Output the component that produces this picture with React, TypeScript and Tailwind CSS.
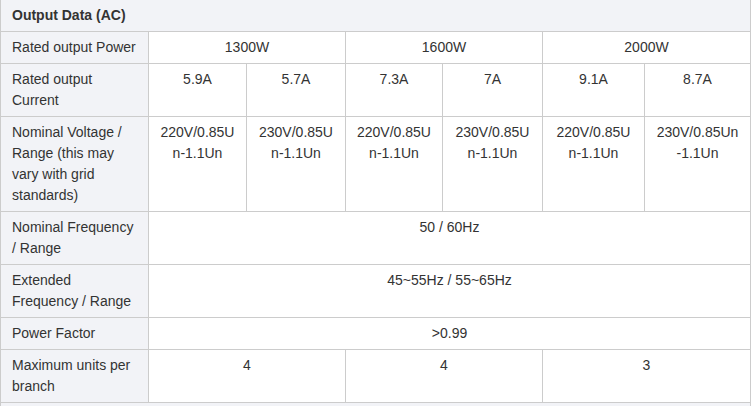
import React from "react";

const th = "border border-[#cccccc] bg-[#f2f3f7] pl-[11px] pr-[10px] py-[5px] text-left align-top font-normal";
const td = "border border-[#cccccc] bg-white px-[10px] py-[5px] text-center align-top";

export default function App() {
  return (
    <div className="bg-white" style={{ fontFamily: '"Liberation Sans", Arial, sans-serif' }}>
      <table className="table-fixed border-collapse w-[750px] text-[14px] leading-[21px] text-[#333333]">
        <colgroup>
          <col className="w-[148px]" />
          <col className="w-[98px]" />
          <col className="w-[99px]" />
          <col className="w-[97px]" />
          <col className="w-[100px]" />
          <col className="w-[102px]" />
          <col className="w-[106px]" />
        </colgroup>
        <tbody>
          <tr>
            <td colSpan={7} className="border border-t-0 border-[#cccccc] bg-[#f2f3f7] pl-[11px] pr-[10px] py-[5px] text-left font-bold">
              Output Data (AC)
            </td>
          </tr>
          <tr>
            <td className={th}>Rated output Power</td>
            <td colSpan={2} className={td}>1300W</td>
            <td colSpan={2} className={td}>1600W</td>
            <td colSpan={2} className={td}>2000W</td>
          </tr>
          <tr>
            <td className={th}>Rated output Current</td>
            <td className={td}>5.9A</td>
            <td className={td}>5.7A</td>
            <td className={td}>7.3A</td>
            <td className={td}>7A</td>
            <td className={td}>9.1A</td>
            <td className={td}>8.7A</td>
          </tr>
          <tr>
            <td className={th}>Nominal Voltage / Range (this may vary with grid standards)</td>
            <td className={td}>220V/0.85U<br />n-1.1Un</td>
            <td className={td}>230V/0.85U<br />n-1.1Un</td>
            <td className={td}>220V/0.85U<br />n-1.1Un</td>
            <td className={td}>230V/0.85U<br />n-1.1Un</td>
            <td className={td}>220V/0.85U<br />n-1.1Un</td>
            <td className={td}>230V/0.85Un<br />-1.1Un</td>
          </tr>
          <tr>
            <td className={th}>Nominal Frequency / Range</td>
            <td colSpan={6} className={td}>50 / 60Hz</td>
          </tr>
          <tr>
            <td className={th}>Extended Frequency / Range</td>
            <td colSpan={6} className={td}>45~55Hz / 55~65Hz</td>
          </tr>
          <tr>
            <td className={th}>Power Factor</td>
            <td colSpan={6} className={td}>&gt;0.99</td>
          </tr>
          <tr>
            <td className={th}>Maximum units per branch</td>
            <td colSpan={2} className={td}>4</td>
            <td colSpan={2} className={td}>4</td>
            <td colSpan={2} className={td}>3</td>
          </tr>
          <tr>
            <td colSpan={7} className="border border-[#cccccc] bg-[#f2f3f7] pl-[11px] pr-[10px] py-[5px] text-left font-bold">
              &nbsp;
            </td>
          </tr>
        </tbody>
      </table>
    </div>
  );
}
